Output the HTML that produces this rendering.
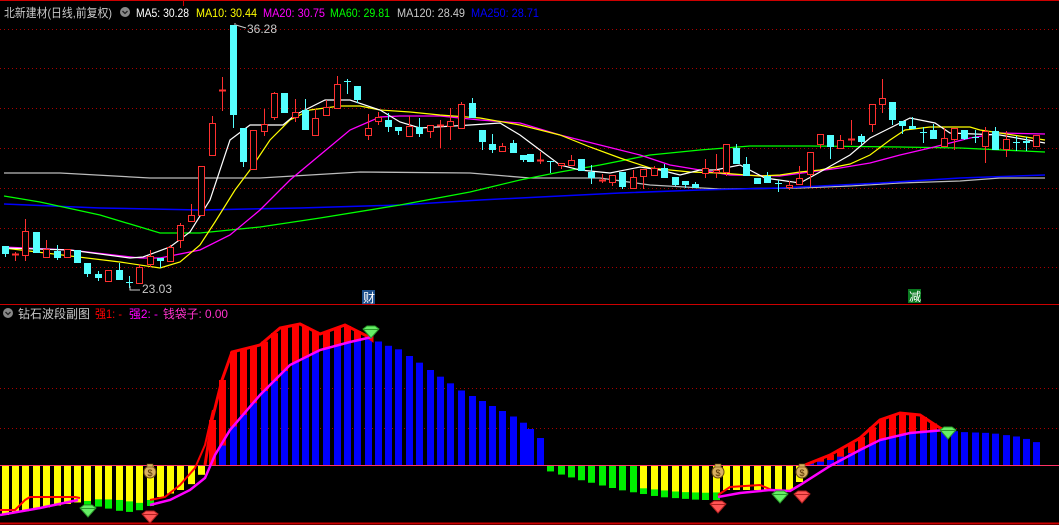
<!DOCTYPE html>
<html><head><meta charset="utf-8"><style>
html,body{margin:0;padding:0;background:#000;width:1059px;height:525px;overflow:hidden}
.t{position:absolute;font:12px "Liberation Sans","Noto Sans CJK SC",sans-serif;white-space:nowrap;line-height:14px}
</style></head><body>
<svg id="s" width="1059" height="525" style="position:absolute;left:0;top:0" xmlns="http://www.w3.org/2000/svg"></svg>
<svg width="1059" height="525" style="position:absolute;left:0;top:0" xmlns="http://www.w3.org/2000/svg" font-family="Liberation Sans, Noto Sans CJK SC, sans-serif" font-size="12">
<text x="4" y="17" fill="#c8c8c8" textLength="108" lengthAdjust="spacingAndGlyphs">北新建材(日线,前复权)</text>
<text x="136" y="17" fill="#fff" textLength="53" lengthAdjust="spacingAndGlyphs">MA5: 30.28</text>
<text x="196" y="17" fill="#ff0" textLength="61" lengthAdjust="spacingAndGlyphs">MA10: 30.44</text>
<text x="263" y="17" fill="#f0f" textLength="62" lengthAdjust="spacingAndGlyphs">MA20: 30.75</text>
<text x="330" y="17" fill="#0f0" textLength="60" lengthAdjust="spacingAndGlyphs">MA60: 29.81</text>
<text x="397" y="17" fill="#c8c8c8" textLength="68" lengthAdjust="spacingAndGlyphs">MA120: 28.49</text>
<text x="471" y="17" fill="#00f" textLength="68" lengthAdjust="spacingAndGlyphs">MA250: 28.71</text>
<text x="247" y="33" fill="#c8c8c8" textLength="30" lengthAdjust="spacingAndGlyphs">36.28</text>
<text x="142" y="293" fill="#c8c8c8" textLength="30" lengthAdjust="spacingAndGlyphs">23.03</text>
<text x="18" y="318" fill="#c8c8c8" textLength="72" lengthAdjust="spacingAndGlyphs">钻石波段副图</text>
<text x="95" y="318" fill="#f00" textLength="27" lengthAdjust="spacingAndGlyphs">强1: -</text>
<text x="129" y="318" fill="#f0f" textLength="29" lengthAdjust="spacingAndGlyphs">强2: -</text>
<text x="163" y="318" fill="#f3c" textLength="65" lengthAdjust="spacingAndGlyphs">钱袋子: 0.00</text>
<rect x="362" y="290" width="13" height="14" fill="#1c4e8a"/><text x="363" y="302" fill="#fff">财</text>
<rect x="908" y="289" width="13" height="14" fill="#0a7a20"/><text x="909" y="301" fill="#fff">减</text>
</svg>
<script>
var s=document.getElementById('s'),h='';
function L(x1,y1,x2,y2,c,w,d){h+='<line x1="'+x1+'" y1="'+y1+'" x2="'+x2+'" y2="'+y2+'" stroke="'+c+'" stroke-width="'+(w||1)+'"'+(d?' stroke-dasharray="'+d+'"':'')+'/>';}
function P(pts,c,w){h+='<polyline fill="none" stroke="'+c+'" stroke-width="'+(w||1)+'" points="'+pts.map(function(p){return p.join(',')}).join(' ')+'"/>';}
function R(x,y,w,hh,f,st){h+='<rect x="'+x+'" y="'+y+'" width="'+w+'" height="'+hh+'" fill="'+(f||'none')+'"'+(st?' stroke="'+st+'"':'')+'/>';}
function I(pts,x){if(x<=pts[0][0])return pts[0][1];for(var i=1;i<pts.length;i++){if(x<=pts[i][0]){var a=pts[i-1],b=pts[i];return a[1]+(b[1]-a[1])*(x-a[0])/(b[0]-a[0]);}}return pts[pts.length-1][1];}
L(0,0.5,1059,0.5,'#c00',1);L(183.5,0,183.5,6,'#c00',1);
[29,68,108,148,188,228,267,388,428].forEach(function(y){L(0,y+.5,1059,y+.5,'#a00',1,'1 3');});
L(0,304.5,1059,304.5,'#c00',1);L(0,523.5,1059,523.5,'#c00',2);
P([[4,173],[60,173],[150,178],[260,178],[360,172],[470,173],[530,178],[600,178],[650,185],[720,189],[800,188],[850,186],[900,183],[960,181],[1000,178],[1045,178]],'#bbb',1.3);
P([[4,204],[100,208],[200,210],[300,208],[400,205],[480,200],[560,196],[620,193],[700,190],[780,188],[820,186],[880,183],[960,178],[1045,175]],'#00f',1.5);
P([[4,196],[40,202],[100,215],[160,233],[200,233],[260,227],[320,218],[400,205],[470,192],[520,180],[560,172],[600,165],[650,155],[700,150],[750,146],[810,146],[900,147],[960,148],[1045,152]],'#0f0',1.3);
P([[4,247],[70,250],[140,258],[160,258],[200,250],[230,235],[260,210],[290,180],[320,155],[350,130],[380,117],[400,116],[440,116],[480,120],[520,123],[560,135],[600,145],[640,155],[670,165],[700,170],[730,175],[780,176],[810,172],[840,168],[870,163],[900,155],[930,148],[970,138],[1000,133],[1045,134]],'#f0f',1.3);
P([[4,248],[120,262],[160,268],[180,262],[200,245],[215,222],[235,190],[250,170],[270,140],[290,120],[310,110],[340,106],[360,106],[380,110],[410,112],[440,115],[480,118],[520,125],[560,135],[590,147],[620,158],[650,168],[690,172],[720,173],[760,176],[780,175],[800,172],[820,170],[850,164],[870,155],[890,140],[905,130],[930,127],[970,127],[980,130],[1000,133],[1045,140]],'#ff0',1.2);
P([[4,248],[70,250],[130,258],[143,257],[170,247],[190,232],[210,200],[230,140],[250,125],[283,125],[295,115],[325,100],[350,100],[380,110],[400,122],[420,128],[470,125],[500,123],[520,135],[540,150],[560,165],[580,170],[610,173],[640,167],[660,170],[680,175],[700,170],[715,170],[740,165],[765,178],[800,183],[820,172],[850,155],[870,138],[890,128],[910,118],[935,123],[950,133],[1000,135],[1045,143]],'#fff',1.2);
var C=[[5,246,254,246,257,0],[15,254,255,252,261,1],[25,231,255,219,261,1],[36,232,253,232,253,0],[46,249,257,240,257,1],[57,251,258,245,260,0],[67,249,257,249,257,1],[77,250,263,250,263,0],[87,263,274,263,277,0],[98,274,278,271,281,0],[108,270,281,270,281,1],[119,270,280,263,280,0],[129,282,283,276,288,0],[139,267,283,264,283,1],[150,256,264,250,267,1],[160,258,261,258,268,0],[170,247,261,245,261,1],[180,225,240,223,248,1],[191,215,221,204,221,1],[201,166,215,166,215,1],[212,123,155,116,155,1],[222,90,91,77,111,1],[233,25,115,25,128,0],[243,128,162,128,167,0],[253,130,169,130,169,1],[264,124,131,109,136,1],[274,93,117,92,120,1],[284,93,113,93,113,0],[295,112,117,99,122,1],[305,110,130,99,130,0],[315,118,135,109,136,1],[326,107,115,100,115,1],[337,84,108,76,108,1],[347,81,82,79,94,0],[357,86,100,86,103,0],[368,128,135,114,140,1],[378,117,121,112,125,1],[388,120,127,113,132,0],[398,127,131,127,135,0],[409,126,136,116,136,1],[419,127,134,118,137,0],[430,125,131,125,138,1],[440,125,126,120,148,1],[450,121,126,108,140,1],[461,104,128,102,128,1],[472,103,118,98,118,0],[482,130,142,130,150,0],[492,144,150,134,153,0],[502,146,151,143,151,1],[513,143,153,140,153,0],[523,155,160,155,162,0],[530,154,162,154,162,0],[540,160,161,152,164,1],[550,161,162,161,173,0],[561,163,165,163,169,1],[571,160,165,155,165,1],[581,159,171,159,171,0],[591,172,178,165,184,0],[602,180,181,174,183,1],[612,175,182,175,186,1],[622,172,187,172,189,0],[633,177,188,170,189,1],[643,169,176,169,189,1],[654,168,175,166,175,1],[664,168,178,164,178,0],[675,177,185,177,186,0],[685,181,185,184,188,0],[695,184,188,182,188,0],[705,168,173,159,178,1],[716,170,172,154,178,1],[726,144,172,144,176,1],[736,148,164,144,164,0],[746,164,176,157,176,0],[757,178,184,178,184,0],[767,176,183,172,183,0],[778,183,184,180,192,0],[789,185,187,181,190,1],[799,178,184,166,184,1],[810,152,174,152,187,1],[820,134,144,134,148,1],[830,135,147,135,159,0],[840,140,148,135,148,1],[851,139,140,120,145,1],[861,136,142,134,145,0],[872,104,124,104,132,1],[882,98,104,79,113,1],[892,102,120,102,125,0],[902,121,126,121,134,0],[912,126,129,117,129,0],[923,132,133,127,143,0],[933,130,139,124,139,0],[944,138,146,128,146,1],[954,128,139,128,150,1],[964,130,139,130,140,0],[975,137,138,130,143,0],[985,131,146,127,163,1],[995,131,150,127,150,0],[1006,139,149,131,157,1],[1016,142,143,136,151,0],[1026,141,143,137,151,0],[1036,135,146,135,146,1]];
C.forEach(function(c){var x=c[0],col=c[5]?'#ff3030':'#55ffff';L(x+.5,c[3],x+.5,c[4],col,1);
 if(c[5]){if(c[2]-c[1]<2)L(x-3,c[1]+.5,x+4,c[1]+.5,col,2);else R(x-2.5,c[1]+.5,6,c[2]-c[1],'#000',col);}
 else{R(x-3,c[1],7,Math.max(1,c[2]-c[1]),col);}});
L(234,24,236,24,'#ccc',1);P([[236,25],[246,28]],'#ccc',1);P([[130,286],[130,290],[140,290]],'#ccc',1);
var B=465;
var Rt=[[205,465],[212,420],[222,380],[232,352],[260,345],[280,328],[300,324],[320,334],[345,325],[365,335],[372,340]];
var Rt2=[[805,465],[830,455],[860,438],[880,420],[900,413],[920,415],[940,428],[948,432]];
var M=[[0,515],[40,508],[78,500],[150,498],[170,495],[190,485],[205,470],[212,465],[230,430],[260,395],[290,365],[320,350],[350,342],[372,337],[380,343],[400,350],[430,370],[460,390],[490,405],[520,420],[540,438],[546,465]];
var M2=[[800,465],[830,460],[860,450],[880,440],[910,433],[945,430],[960,432],[990,433],[1020,437],[1045,445]];
var Y=[[0,516],[20,512],[60,505],[80,502],[100,499],[120,500],[140,503],[160,497],[180,490],[195,482],[205,470],[210,465]];
var Y2=[[640,488],[680,492],[715,493],[720,490],[760,490],[795,490],[805,470]];
var G=[[85,504],[100,507],[120,511],[130,512],[145,509],[155,503]];
var G2=[[545,470],[580,480],[620,490],[660,497],[700,500],[716,500]];
for(var i=0;i<101;i++){var x=C[i][0],bx=x-3,bw=7;
 if(x<212){var yb=I(Y,x);if(x>=85&&x<=150){var g=I(G,x);R(bx,B,bw,g-B,'#00ee00');}R(bx,B,bw,yb-B,'#ffff00');}
 else if(x<=372){var r=I(Rt,x),m=I(M,x);R(bx,r,bw,B-r,'#ff0000');R(bx,m,bw,B-m,'#0000ff');}
 else if(x<546){var m=I(M,x);R(bx,m,bw,B-m,'#0000ff');}
 else if(x<800){if(x<=716){var g=I(G2,x);R(bx,B,bw,g-B,'#00ee00');}if(x>=640){var yb=I(Y2,x);R(bx,B,bw,yb-B,'#ffff00');}}
 else{ if(x<=948){var r=I(Rt2,x);R(bx,r,bw,B-r,'#ff0000');} var m=I(M2,x);if(m<B)R(bx,m,bw,B-m,'#0000ff');}
}
P(Rt.concat([[372,336]]),'#ff0000',3);P(Rt2,'#ff0000',3);
L(0,465.5,1059,465.5,'#ff3366',1);
P([[0,510],[15,510],[25,500],[30,497],[75,497],[80,498]],'#ff0000',2);
P([[150,500],[165,497],[180,485],[195,468],[205,445],[213,410]],'#ff0000',2);
P([[718,495],[730,487],[760,485],[772,490]],'#ff0000',2);
P([[0,515],[40,508],[78,500]],'#ff00ff',2.5);
P([[150,505],[170,500],[190,490],[205,478],[215,455],[230,430],[260,395],[290,365],[320,350],[350,342],[372,337]],'#ff00ff',2.5);
P([[718,497],[740,493],[770,490],[790,491],[800,485],[830,466],[860,450],[880,440],[910,433],[945,430]],'#ff00ff',2.5);
function dia(x,y,c,c2){h+='<polygon points="'+(x-8)+','+(y-4)+' '+(x-4)+','+(y-7)+' '+(x+4)+','+(y-7)+' '+(x+8)+','+(y-4)+' '+x+','+(y+5)+'" fill="'+c+'" stroke="'+c2+'" stroke-width="1"/>';L(x-8,y-3.5,x+8,y-3.5,c2,1);}
function bag(x,y){h+='<ellipse cx="'+x+'" cy="'+(y+2)+'" rx="6" ry="6" fill="#d8b060" stroke="#6a4a10"/><rect x="'+(x-3)+'" y="'+(y-6)+'" width="6" height="3" fill="#d8b060" stroke="#6a4a10" stroke-width=".6"/><text x="'+x+'" y="'+(y+6)+'" font-size="9" font-family="Liberation Sans" text-anchor="middle" fill="#503000">$</text>';}
dia(88,512,'#66ee66','#2a9a2a');dia(371,333,'#66ee66','#2a9a2a');dia(780,498,'#66ee66','#2a9a2a');dia(948,434,'#66ee66','#2a9a2a');
dia(150,518,'#ff5555','#b02020');dia(718,508,'#ff5555','#b02020');dia(802,498,'#ff5555','#b02020');
bag(150,470);bag(718,470);bag(802,470);
h+='<circle cx="125" cy="12" r="5" fill="#888"/><path d="M122.5 11 L125 13.5 L127.5 11" stroke="#222" stroke-width="1.3" fill="none"/>';
h+='<circle cx="8" cy="313" r="5" fill="#888"/><path d="M5.5 312 L8 314.5 L10.5 312" stroke="#222" stroke-width="1.3" fill="none"/>';
s.innerHTML=h;
</script>
</body></html>
